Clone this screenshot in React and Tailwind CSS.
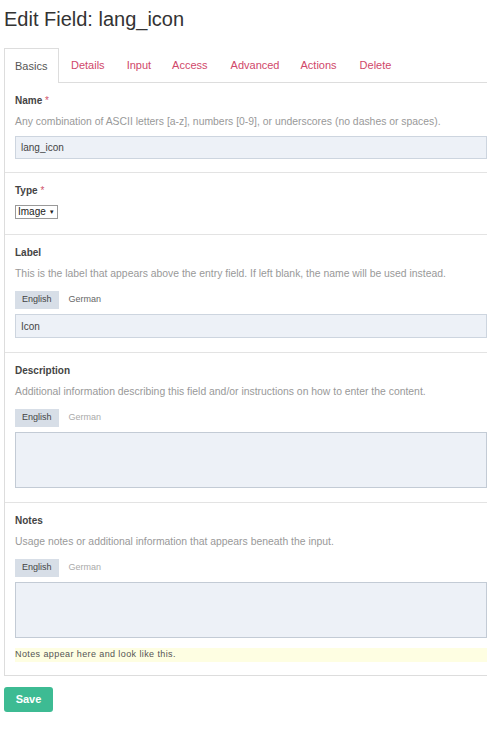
import React from "react";

const font = { fontFamily: '"Liberation Sans", Arial, sans-serif' };

function LangTabs({ germanColor = "text-[#666]" }) {
  return (
    <div className="flex items-center h-[18px] text-[9px]">
      <div className="h-full px-[7px] flex items-center bg-[#d7dee7] text-[#444]">English</div>
      <div className={`h-full px-[10px] flex items-center ${germanColor}`}>German</div>
    </div>
  );
}

function Section({ label, required, help, children, last }) {
  return (
    <div className={`pl-[10px] ${last ? "" : "border-b border-[#e3e3e3]"}`}>
      <div className="text-[10px] font-bold text-[#444] leading-[10px] pt-[13px]">
        {label}
        {required && <span className="text-[#d0556a] font-normal"> *</span>}
      </div>
      {help && (
        <div className="text-[10.4px] text-[#999] leading-[10px] mt-[11px]">{help}</div>
      )}
      {children}
    </div>
  );
}

export default function App() {
  return (
    <div className="w-[487px] h-[750px] bg-white overflow-hidden" style={font}>
      <div className="pl-[4px]">
        <h1 className="text-[20px] text-[#333] leading-none pt-[9px] h-[48px]">Edit Field: lang_icon</h1>
        <div className="flex h-[35px] text-[11px]">
          <div className="w-[55px] border border-b-0 border-[#ddd] flex items-center pl-[10px] text-[#555] bg-white">Basics</div>
          <div className="flex-1 flex items-center border-b border-[#ddd] text-[#d0476a]">
            <span className="ml-[12px]">Details</span>
            <span className="ml-[22px]">Input</span>
            <span className="ml-[21px]">Access</span>
            <span className="ml-[23px]">Advanced</span>
            <span className="ml-[21px]">Actions</span>
            <span className="ml-[23px]">Delete</span>
          </div>
        </div>
        <div className="border-l border-b border-[#ddd]">
          <Section label="Name" required help="Any combination of ASCII letters [a-z], numbers [0-9], or underscores (no dashes or spaces).">
            <div className="mt-[9px] mb-[13px] h-[23px] border border-[#cdd5df] bg-[#edf1f7] flex items-center pl-[5px] text-[10px] text-[#444]">lang_icon</div>
          </Section>
          <Section label="Type" required>
            <div className="mt-[9px] mb-[15px] inline-flex items-center h-[14px] border border-[#999] px-[2px] text-[10px] text-[#222] bg-white leading-none">
              Image <span className="text-[6px] ml-[3px]">▼</span>
            </div>
          </Section>
          <Section label="Label" help="This is the label that appears above the entry field. If left blank, the name will be used instead.">
            <div className="mt-[12px]"><LangTabs /></div>
            <div className="mt-[5px] mb-[14px] h-[24px] border border-[#cdd5df] bg-[#edf1f7] flex items-center pl-[5px] text-[10px] text-[#444]">Icon</div>
          </Section>
          <Section label="Description" help="Additional information describing this field and/or instructions on how to enter the content.">
            <div className="mt-[12px]"><LangTabs germanColor="text-[#aaa]" /></div>
            <div className="mt-[5px] mb-[14px] h-[56px] border border-[#c3cbd5] bg-[#edf1f7]"></div>
          </Section>
          <Section label="Notes" help="Usage notes or additional information that appears beneath the input." last>
            <div className="mt-[12px]"><LangTabs germanColor="text-[#aaa]" /></div>
            <div className="mt-[5px] h-[56px] border border-[#c3cbd5] bg-[#edf1f7]"></div>
            <div className="mt-[10px] mb-[13px] h-[14px] bg-[#fefee2] flex items-center text-[9px] tracking-[0.4px] text-[#555]">Notes appear here and look like this.</div>
          </Section>
        </div>
        <button className="mt-[11px] w-[49px] h-[25px] rounded-[3px] bg-[#3dbb93] text-white font-bold text-[11px]">Save</button>
      </div>
    </div>
  );
}
